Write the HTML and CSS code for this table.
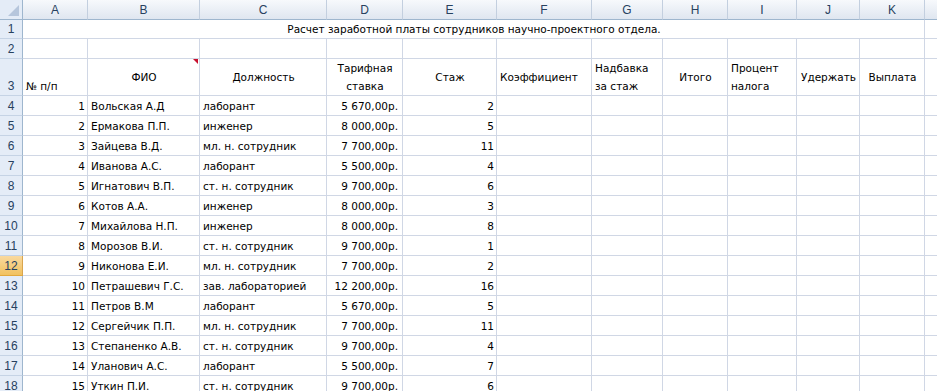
FILE: index.html
```html
<!DOCTYPE html>
<html lang="ru">
<head>
<meta charset="utf-8">
<title>Расчет заработной платы</title>
<link rel="stylesheet" href="styles.css">
</head>
<body>
<table class="sheet">
  <colgroup>
    <col class="c-rh"><col class="c-a"><col class="c-b"><col class="c-c"><col class="c-d"><col class="c-e"><col class="c-f"><col class="c-g"><col class="c-h"><col class="c-i"><col class="c-j"><col class="c-k"><col class="c-l">
  </colgroup>
  <thead>
    <tr class="colhead">
      <th class="corner"><span class="tri"></span></th>
      <th>A</th><th>B</th><th>C</th><th>D</th><th>E</th><th>F</th><th>G</th><th>H</th><th>I</th><th>J</th><th>K</th><th></th>
    </tr>
  </thead>
  <tbody>
    <tr class="r1">
      <th class="rh">1</th>
      <td colspan="11" class="title">Расчет заработной платы сотрудников научно-проектного отдела.</td>
      <td></td>
    </tr>
    <tr class="r2">
      <th class="rh">2</th>
      <td></td><td></td><td></td><td></td><td></td><td></td><td></td><td></td><td></td><td></td><td></td><td></td>
    </tr>
    <tr class="r3">
      <th class="rh">3</th>
      <td class="hd-bottom">№ п/п</td>
      <td class="hd-center comment">ФИО<span class="note"></span></td>
      <td class="hd-center">Должность</td>
      <td class="hd-center">Тарифная<br>ставка</td>
      <td class="hd-center">Стаж</td>
      <td class="hd-left">Коэффициент</td>
      <td class="hd-left">Надбавка<br>за стаж</td>
      <td class="hd-center">Итого</td>
      <td class="hd-left">Процент<br>налога</td>
      <td class="hd-center">Удержать</td>
      <td class="hd-center">Выплата</td>
      <td></td>
    </tr>
    <tr><th class="rh">4</th><td class="num">1</td><td>Вольская А.Д</td><td>лаборант</td><td class="money">5 670,00р.</td><td class="num">2</td><td></td><td></td><td></td><td></td><td></td><td></td><td></td></tr>
    <tr><th class="rh">5</th><td class="num">2</td><td>Ермакова П.П.</td><td>инженер</td><td class="money">8 000,00р.</td><td class="num">5</td><td></td><td></td><td></td><td></td><td></td><td></td><td></td></tr>
    <tr><th class="rh">6</th><td class="num">3</td><td>Зайцева В.Д.</td><td>мл. н. сотрудник</td><td class="money">7 700,00р.</td><td class="num">11</td><td></td><td></td><td></td><td></td><td></td><td></td><td></td></tr>
    <tr><th class="rh">7</th><td class="num">4</td><td>Иванова А.С.</td><td>лаборант</td><td class="money">5 500,00р.</td><td class="num">4</td><td></td><td></td><td></td><td></td><td></td><td></td><td></td></tr>
    <tr><th class="rh">8</th><td class="num">5</td><td>Игнатович В.П.</td><td>ст. н. сотрудник</td><td class="money">9 700,00р.</td><td class="num">6</td><td></td><td></td><td></td><td></td><td></td><td></td><td></td></tr>
    <tr><th class="rh">9</th><td class="num">6</td><td>Котов А.А.</td><td>инженер</td><td class="money">8 000,00р.</td><td class="num">3</td><td></td><td></td><td></td><td></td><td></td><td></td><td></td></tr>
    <tr><th class="rh">10</th><td class="num">7</td><td>Михайлова Н.П.</td><td>инженер</td><td class="money">8 000,00р.</td><td class="num">8</td><td></td><td></td><td></td><td></td><td></td><td></td><td></td></tr>
    <tr><th class="rh">11</th><td class="num">8</td><td>Морозов В.И.</td><td>ст. н. сотрудник</td><td class="money">9 700,00р.</td><td class="num">1</td><td></td><td></td><td></td><td></td><td></td><td></td><td></td></tr>
    <tr><th class="rh active">12</th><td class="num">9</td><td>Никонова Е.И.</td><td>мл. н. сотрудник</td><td class="money">7 700,00р.</td><td class="num">2</td><td></td><td></td><td></td><td></td><td></td><td></td><td></td></tr>
    <tr><th class="rh">13</th><td class="num">10</td><td>Петрашевич Г.С.</td><td>зав. лабораторией</td><td class="money">12 200,00р.</td><td class="num">16</td><td></td><td></td><td></td><td></td><td></td><td></td><td></td></tr>
    <tr><th class="rh">14</th><td class="num">11</td><td>Петров В.М</td><td>лаборант</td><td class="money">5 670,00р.</td><td class="num">5</td><td></td><td></td><td></td><td></td><td></td><td></td><td></td></tr>
    <tr><th class="rh">15</th><td class="num">12</td><td>Сергейчик П.П.</td><td>мл. н. сотрудник</td><td class="money">7 700,00р.</td><td class="num">11</td><td></td><td></td><td></td><td></td><td></td><td></td><td></td></tr>
    <tr><th class="rh">16</th><td class="num">13</td><td>Степаненко А.В.</td><td>ст. н. сотрудник</td><td class="money">9 700,00р.</td><td class="num">4</td><td></td><td></td><td></td><td></td><td></td><td></td><td></td></tr>
    <tr><th class="rh">17</th><td class="num">14</td><td>Уланович А.С.</td><td>лаборант</td><td class="money">5 500,00р.</td><td class="num">7</td><td></td><td></td><td></td><td></td><td></td><td></td><td></td></tr>
    <tr><th class="rh">18</th><td class="num">15</td><td>Уткин П.И.</td><td>ст. н. сотрудник</td><td class="money">9 700,00р.</td><td class="num">6</td><td></td><td></td><td></td><td></td><td></td><td></td><td></td></tr>
  </tbody>
</table>
</body>
</html>
```

FILE: styles.css
```css
html, body {
  margin: 0;
  padding: 0;
  background: #ffffff;
  overflow: hidden;
}

.sheet {
  border-collapse: separate;
  border-spacing: 0;
  table-layout: fixed;
  width: 950px;
  font-family: "DejaVu Sans", Verdana, sans-serif;
  font-size: 10.5px;
  color: #000000;
}

.c-rh { width: 23px; }
.c-a { width: 65px; }
.c-b { width: 112px; }
.c-c { width: 127px; }
.c-d { width: 76px; }
.c-e { width: 94px; }
.c-f { width: 95px; }
.c-g { width: 71px; }
.c-h { width: 65px; }
.c-i { width: 69px; }
.c-j { width: 63px; }
.c-k { width: 65px; }
.c-l { width: 41px; }

.sheet th,
.sheet td {
  box-sizing: border-box;
  padding: 0 2px 2px 3px;
  border-right: 1px solid #d0d7e5;
  border-bottom: 1px solid #d0d7e5;
  white-space: nowrap;
  overflow: visible;
  vertical-align: bottom;
  line-height: 14px;
  font-weight: normal;
  text-align: left;
}

.sheet tr { height: 20px; }
.sheet tr.r1 { height: 19px; }
.sheet tr.r2 { height: 20px; }
.sheet tr.r3 { height: 36px; }

.sheet tr.colhead { height: 20px; }
.colhead th {
  background: linear-gradient(#f7f9fc, #dfe6f0);
  border-right: 1px solid #c3cfdf;
  border-bottom: 1px solid #9eb6ce;
  color: #27415f;
  text-align: center;
  vertical-align: middle;
  padding: 0;
  font-family: "Liberation Sans", Arial, sans-serif;
  font-size: 12px;
}

.sheet .colhead th {
  text-align: center;
  vertical-align: middle;
  padding: 0;
}

.colhead th.corner {
  position: relative;
  background: #e4ecf7;
  border-right: 1px solid #9eb6ce;
}

.tri {
  position: absolute;
  right: 3px;
  bottom: 3px;
  width: 0;
  height: 0;
  border-left: 11px solid transparent;
  border-bottom: 11px solid #b6c6dc;
}

.sheet th.rh {
  background: #e4ecf7;
  border-right: 1px solid #9eb6ce;
  border-bottom: 1px solid #c5d3e5;
  color: #27415f;
  text-align: center;
  vertical-align: middle;
  padding: 0;
  font-family: "Liberation Sans", Arial, sans-serif;
  font-size: 12px;
}

.sheet tr.r3 th.rh {
  vertical-align: bottom;
  padding-bottom: 2px;
}

.sheet th.rh.active {
  background: linear-gradient(#f9d99f, #f1c15f);
  border-bottom-color: #e2a83d;
  border-right-color: #d9a54e;
}

.sheet td.title {
  text-align: center;
}

.sheet td.hd-center,
.sheet td.hd-left {
  vertical-align: middle;
  padding-bottom: 0;
  line-height: 18px;
}
.sheet td.hd-center { text-align: center; }
.sheet td.hd-left { text-align: left; }
.sheet td.hd-bottom { vertical-align: bottom; }

.comment { position: relative; }
.note {
  position: absolute;
  right: 1px;
  top: 0;
  width: 0;
  height: 0;
  border-left: 5px solid transparent;
  border-top: 5px solid #c8102e;
}

.sheet td.num { text-align: right; }
.sheet td.money { text-align: right; padding-right: 4px; }
```
